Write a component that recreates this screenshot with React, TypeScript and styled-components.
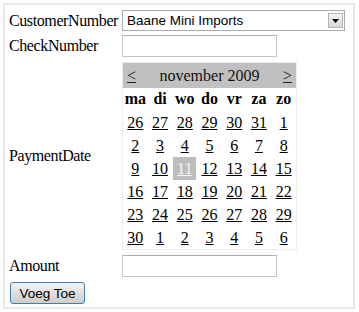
import React from 'react';
import styled, { createGlobalStyle } from 'styled-components';

const GlobalStyle = createGlobalStyle`
  body {
    margin: 0;
    background: #ffffff;
    font-family: "Liberation Serif", "Times New Roman", serif;
    font-size: 16px;
    color: #000000;
  }
`;

const weekDays = ['ma', 'di', 'wo', 'do', 'vr', 'za', 'zo'];

const weeks = [
  [26, 27, 28, 29, 30, 31, 1],
  [2, 3, 4, 5, 6, 7, 8],
  [9, 10, 11, 12, 13, 14, 15],
  [16, 17, 18, 19, 20, 21, 22],
  [23, 24, 25, 26, 27, 28, 29],
  [30, 1, 2, 3, 4, 5, 6],
];

// index of the selected day (11 november) in the flattened grid
const selectedIndex = 16;

function App() {
  return (
    <>
      <GlobalStyle />
      <Frame>
        <Form>
          <Label>CustomerNumber</Label>
          <Select>
            <SelectText>Baane Mini Imports</SelectText>
            <SelectArrow>
              <svg width="7" height="4" viewBox="0 0 7 4">
                <path d="M0 0 H7 L3.5 4 Z" fill="#000" />
              </svg>
            </SelectArrow>
          </Select>

          <Label>CheckNumber</Label>
          <Field>
            <TextBox />
          </Field>

          <Label>PaymentDate</Label>
          <Field>
            <Calendar>
              <CalHeader>
                <NavLink>&lt;</NavLink>
                <span>november 2009</span>
                <NavLink>&gt;</NavLink>
              </CalHeader>
              <DayGrid>
                {weekDays.map((d) => (
                  <DayName key={d}>{d}</DayName>
                ))}
                {weeks.flat().map((n, i) => (
                  <DayCell key={i} selected={i === selectedIndex}>
                    <DayLink selected={i === selectedIndex}>{n}</DayLink>
                  </DayCell>
                ))}
              </DayGrid>
            </Calendar>
          </Field>

          <Label>Amount</Label>
          <Field>
            <TextBox />
          </Field>
        </Form>
        <Button>Voeg Toe</Button>
      </Frame>
    </>
  );
}

const Frame = styled.div`
  margin: 3px;
  width: 352px;
  height: 306px;
  border: 2px solid #e9e9e9;
  box-sizing: border-box;
  padding: 5px 0 0 4px;
`;

const Form = styled.div`
  display: grid;
  grid-template-columns: 113px auto;
  row-gap: 3px;
  align-items: center;
`;

const Label = styled.div`
  line-height: 20px;
  letter-spacing: -0.4px;
  white-space: nowrap;
`;

const Field = styled.div`
  display: flex;
  padding: 1px 0;
`;

const Select = styled.div`
  display: flex;
  align-items: center;
  width: 223px;
  height: 21px;
  box-sizing: border-box;
  border: 1px solid #a5acb2;
  padding: 1px;
`;

const SelectText = styled.span`
  flex: 1;
  font-family: "Liberation Sans", Arial, sans-serif;
  font-size: 13.5px;
  padding-left: 3px;
`;

const SelectArrow = styled.span`
  display: flex;
  align-items: center;
  justify-content: center;
  width: 15px;
  height: 15px;
  box-sizing: border-box;
  border: 1px solid #b5b5b5;
  background: linear-gradient(#f4f4f4, #d8d8d8);
`;

const TextBox = styled.div`
  width: 155px;
  height: 22px;
  box-sizing: border-box;
  border: 1px solid #c3c6cb;
  border-top-color: #abadb3;
`;

const Calendar = styled.div`
  width: 175px;
  border: 1px solid #ececec;
  box-sizing: border-box;
`;

const CalHeader = styled.div`
  display: flex;
  justify-content: space-between;
  align-items: center;
  height: 25px;
  padding: 0 4px;
  background: #c0c0c0;
  color: #111;
`;

const NavLink = styled.span`
  text-decoration: underline;
  color: #222;
`;

const DayGrid = styled.div`
  display: grid;
  grid-template-columns: repeat(7, 1fr);
  grid-auto-rows: 23px;
`;

const DayName = styled.div`
  display: flex;
  align-items: center;
  justify-content: center;
  font-weight: bold;
  height: 22px;
`;

const DayCell = styled.div<{ selected?: boolean }>`
  display: flex;
  align-items: center;
  justify-content: center;
  margin: 0 1px;
  background: ${(p) => (p.selected ? '#bdbdbd' : 'transparent')};
`;

const DayLink = styled.span<{ selected?: boolean }>`
  text-decoration: underline;
  color: ${(p) => (p.selected ? '#f4f4f4' : '#000')};
`;

const Button = styled.button`
  margin: 4px 0 0 1px;
  width: 75px;
  height: 22px;
  border: 1px solid #3c7fb1;
  border-radius: 3px;
  background: linear-gradient(#f6f6f6, #dedede 50%, #cfcfcf);
  font-family: "Liberation Sans", Arial, sans-serif;
  font-size: 13.5px;
  color: #000;
  padding: 0;
`;

export default App;
